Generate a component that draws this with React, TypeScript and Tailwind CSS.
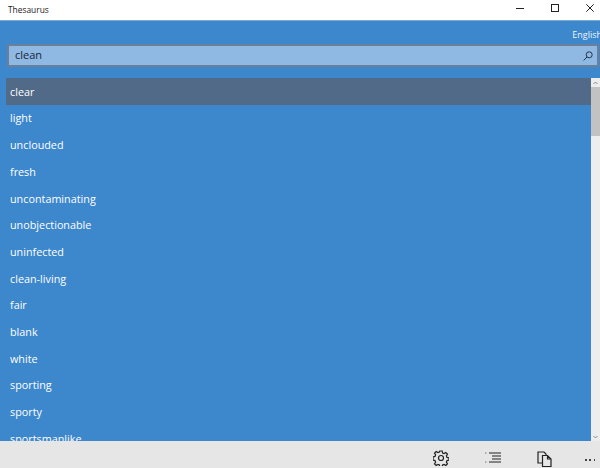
import React from "react";

const words = [
  "clear",
  "light",
  "unclouded",
  "fresh",
  "uncontaminating",
  "unobjectionable",
  "uninfected",
  "clean-living",
  "fair",
  "blank",
  "white",
  "sporting",
  "sporty",
  "sportsmanlike",
];

export default function App() {
  return (
    <div className="flex h-[468px] w-[600px] flex-col overflow-hidden bg-[#3d87cd] font-['Open_Sans','Noto_Sans',sans-serif]">
      {/* title bar */}
      <div className="flex h-[21px] shrink-0 items-center justify-between border-b border-[#7fa9d8] bg-white pl-2">
        <span className="text-[8.4px] text-[#222]">Thesaurus</span>
        <div className="flex items-center gap-[27px] pb-[4px] pr-[6px] text-[#222]">
          <svg width="8" height="8" viewBox="0 0 8 8">
            <path d="M0 4.5h8" stroke="currentColor" fill="none" />
          </svg>
          <svg width="8" height="8" viewBox="0 0 8 8">
            <rect x="0.5" y="0.5" width="7" height="7" stroke="currentColor" fill="none" />
          </svg>
          <svg width="8" height="8" viewBox="0 0 8 8">
            <path d="M0.3 0.3l7.4 7.4M7.7 0.3l-7.4 7.4" stroke="currentColor" fill="none" />
          </svg>
        </div>
      </div>

      {/* language */}
      <div className="flex h-[23px] shrink-0 items-end justify-end overflow-hidden pb-[5px]">
        <span className="mr-[-2px] text-[9px] leading-none text-[#eef6fd]">English</span>
      </div>

      {/* search */}
      <div className="ml-[7px] mr-[1px] flex h-[23px] shrink-0 items-center justify-between border-2 border-[#6c7f98] bg-[#8fb8e2] pl-[6px] pr-[4px]">
        <span className="text-[11px] text-[#16263c]">clean</span>
        <svg width="10" height="10" viewBox="0 0 10 10" className="text-[#23364f]">
          <circle cx="6.2" cy="3.8" r="3" stroke="currentColor" fill="none" />
          <path d="M4 6L0.6 9.4" stroke="currentColor" fill="none" />
        </svg>
      </div>

      {/* list and scrollbar */}
      <div className="mt-[11px] flex min-h-0 flex-1 pl-[6px]">
        <div className="min-w-0 flex-1 overflow-hidden">
          {words.map((word, i) => (
            <div
              key={word}
              className={
                i === 0
                  ? "flex h-[26.7px] items-center bg-[#506a87] pl-[4px] pt-[1px] text-[10.8px] text-white"
                  : "flex h-[26.7px] items-center pl-[4px] pt-[1px] text-[10.8px] text-white"
              }
            >
              {word}
            </div>
          ))}
        </div>
        <div className="flex w-[9px] shrink-0 flex-col bg-[#ededed]">
          <div className="flex h-[9px] items-center justify-center">
            <svg width="5" height="4" viewBox="0 0 5 4">
              <path d="M0.5 3L2.5 1L4.5 3" stroke="#8a8a8a" fill="none" />
            </svg>
          </div>
          <div className="h-[49px] bg-[#c2c2c2]" />
          <div className="flex-1" />
          <div className="flex h-[9px] items-center justify-center">
            <svg width="5" height="4" viewBox="0 0 5 4">
              <path d="M0.5 1L2.5 3L4.5 1" stroke="#8a8a8a" fill="none" />
            </svg>
          </div>
        </div>
      </div>

      {/* bottom bar */}
      <div className="flex h-[27px] shrink-0 items-center justify-end bg-[#e6e6e6] pr-[5px] pt-[7px] text-[#222]">
        <svg width="16" height="16" viewBox="0 0 16 16" className="mr-[36px]">
          <circle cx="8" cy="8" r="2.5" stroke="currentColor" strokeWidth="1.2" fill="none" />
          <path
            d="M6.8 1h2.4l.4 2 1.5.6 1.7-1.1 1.7 1.7-1.1 1.7.6 1.5 2 .4v2.4l-2 .4-.6 1.5 1.1 1.7-1.7 1.7-1.7-1.1-1.5.6-.4 2H6.8l-.4-2-1.5-.6-1.7 1.1-1.7-1.7 1.1-1.7-.6-1.5-2-.4V6.8l2-.4.6-1.5-1.1-1.7 1.7-1.7 1.7 1.1 1.5-.6z"
            stroke="currentColor"
            strokeWidth="1.2"
            fill="none"
          />
        </svg>
        <svg width="16" height="14" viewBox="0 0 16 14" className="mr-[36px]">
          <path d="M4 2h12M7 5h9M7 8h9M4 11h12" stroke="currentColor" strokeWidth="1.2" fill="none" />
          <path d="M0 2h1.5M0 11h1.5" stroke="#777" fill="none" />
        </svg>
        <svg width="15" height="16" viewBox="0 0 15 16" className="mr-[33px] mt-[2px]">
          <path d="M5 12H1V1h6l2 2v1" stroke="currentColor" strokeWidth="1.2" fill="none" />
          <path d="M5.5 4.5h5l3.5 3.5v7.5H5.5z M10.5 4.5V8H14" stroke="currentColor" strokeWidth="1.2" fill="none" />
        </svg>
        <span className="mt-[4px] flex w-[10px] justify-between">
          <span className="h-[1.5px] w-[1.5px] bg-[#444]" />
          <span className="h-[1.5px] w-[1.5px] bg-[#444]" />
          <span className="h-[1.5px] w-[1.5px] bg-[#444]" />
        </span>
      </div>
    </div>
  );
}
